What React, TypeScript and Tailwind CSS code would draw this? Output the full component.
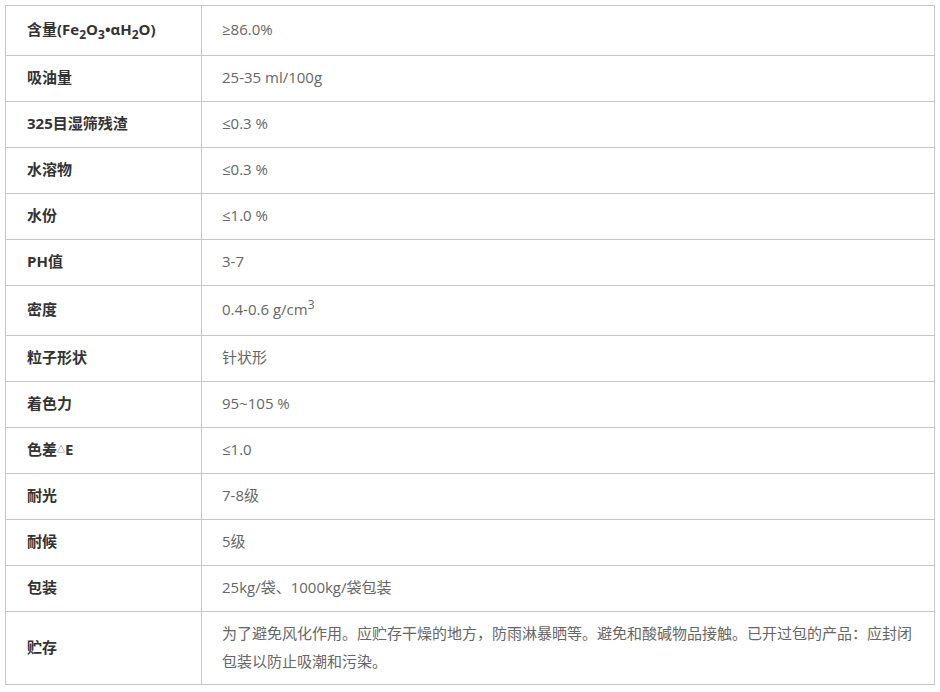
const sub = "text-[12px] align-[-4px] leading-none bottom-0";

const rows: { label: React.ReactNode; value: React.ReactNode; h: string }[] = [
  {
    label: (
      <>
        含量(Fe<sub className={sub}>2</sub>O<sub className={sub}>3</sub>•αH
        <sub className={sub}>2</sub>O)
      </>
    ),
    value: "≥86.0%",
    h: "h-[50px]",
  },
  { label: "吸油量", value: "25-35 ml/100g", h: "h-[46px]" },
  { label: "325目湿筛残渣", value: "≤0.3 %", h: "h-[46px]" },
  { label: "水溶物", value: "≤0.3 %", h: "h-[46px]" },
  { label: "水份", value: "≤1.0 %", h: "h-[46px]" },
  { label: "PH值", value: "3-7", h: "h-[46px]" },
  {
    label: "密度",
    value: (
      <>
        0.4-0.6 g/cm<sup className="text-[12px] align-[6px] leading-none top-0">3</sup>
      </>
    ),
    h: "h-[50px]",
  },
  { label: "粒子形状", value: "针状形", h: "h-[46px]" },
  { label: "着色力", value: "95~105 %", h: "h-[46px]" },
  {
    label: (
      <>
        色差<span className="text-[8px] align-[3px] leading-none font-normal">△</span>E
      </>
    ),
    value: "≤1.0",
    h: "h-[46px]",
  },
  { label: "耐光", value: "7-8级", h: "h-[46px]" },
  { label: "耐候", value: "5级", h: "h-[46px]" },
  { label: "包装", value: "25kg/袋、1000kg/袋包装", h: "h-[46px]" },
  {
    label: "贮存",
    value: "为了避免风化作用。应贮存干燥的地方，防雨淋暴晒等。避免和酸碱物品接触。已开过包的产品：应封闭包装以防止吸潮和污染。",
    h: "h-[73px]",
  },
];

export default function App() {
  return (
    <div
      className="w-[940px] h-[692px] bg-white pt-[5px] pl-[5px]"
      style={{ fontFamily: '"Open Sans", "Noto Sans CJK SC", sans-serif' }}
    >
      <table className="w-[930px] border-collapse text-[15px] leading-[28px]">
        <tbody>
          {rows.map((r, i) => (
            <tr key={i} className={r.h}>
              <td className="w-[196px] border border-[#c6c6c6] pl-[21px] pr-3 pb-[3px] font-bold text-[#333333] align-middle">
                {r.label}
              </td>
              <td className="border border-[#c6c6c6] pl-[20px] pr-5 pb-[3px] text-[#666666] align-middle">
                {r.value}
              </td>
            </tr>
          ))}
        </tbody>
      </table>
    </div>
  );
}
